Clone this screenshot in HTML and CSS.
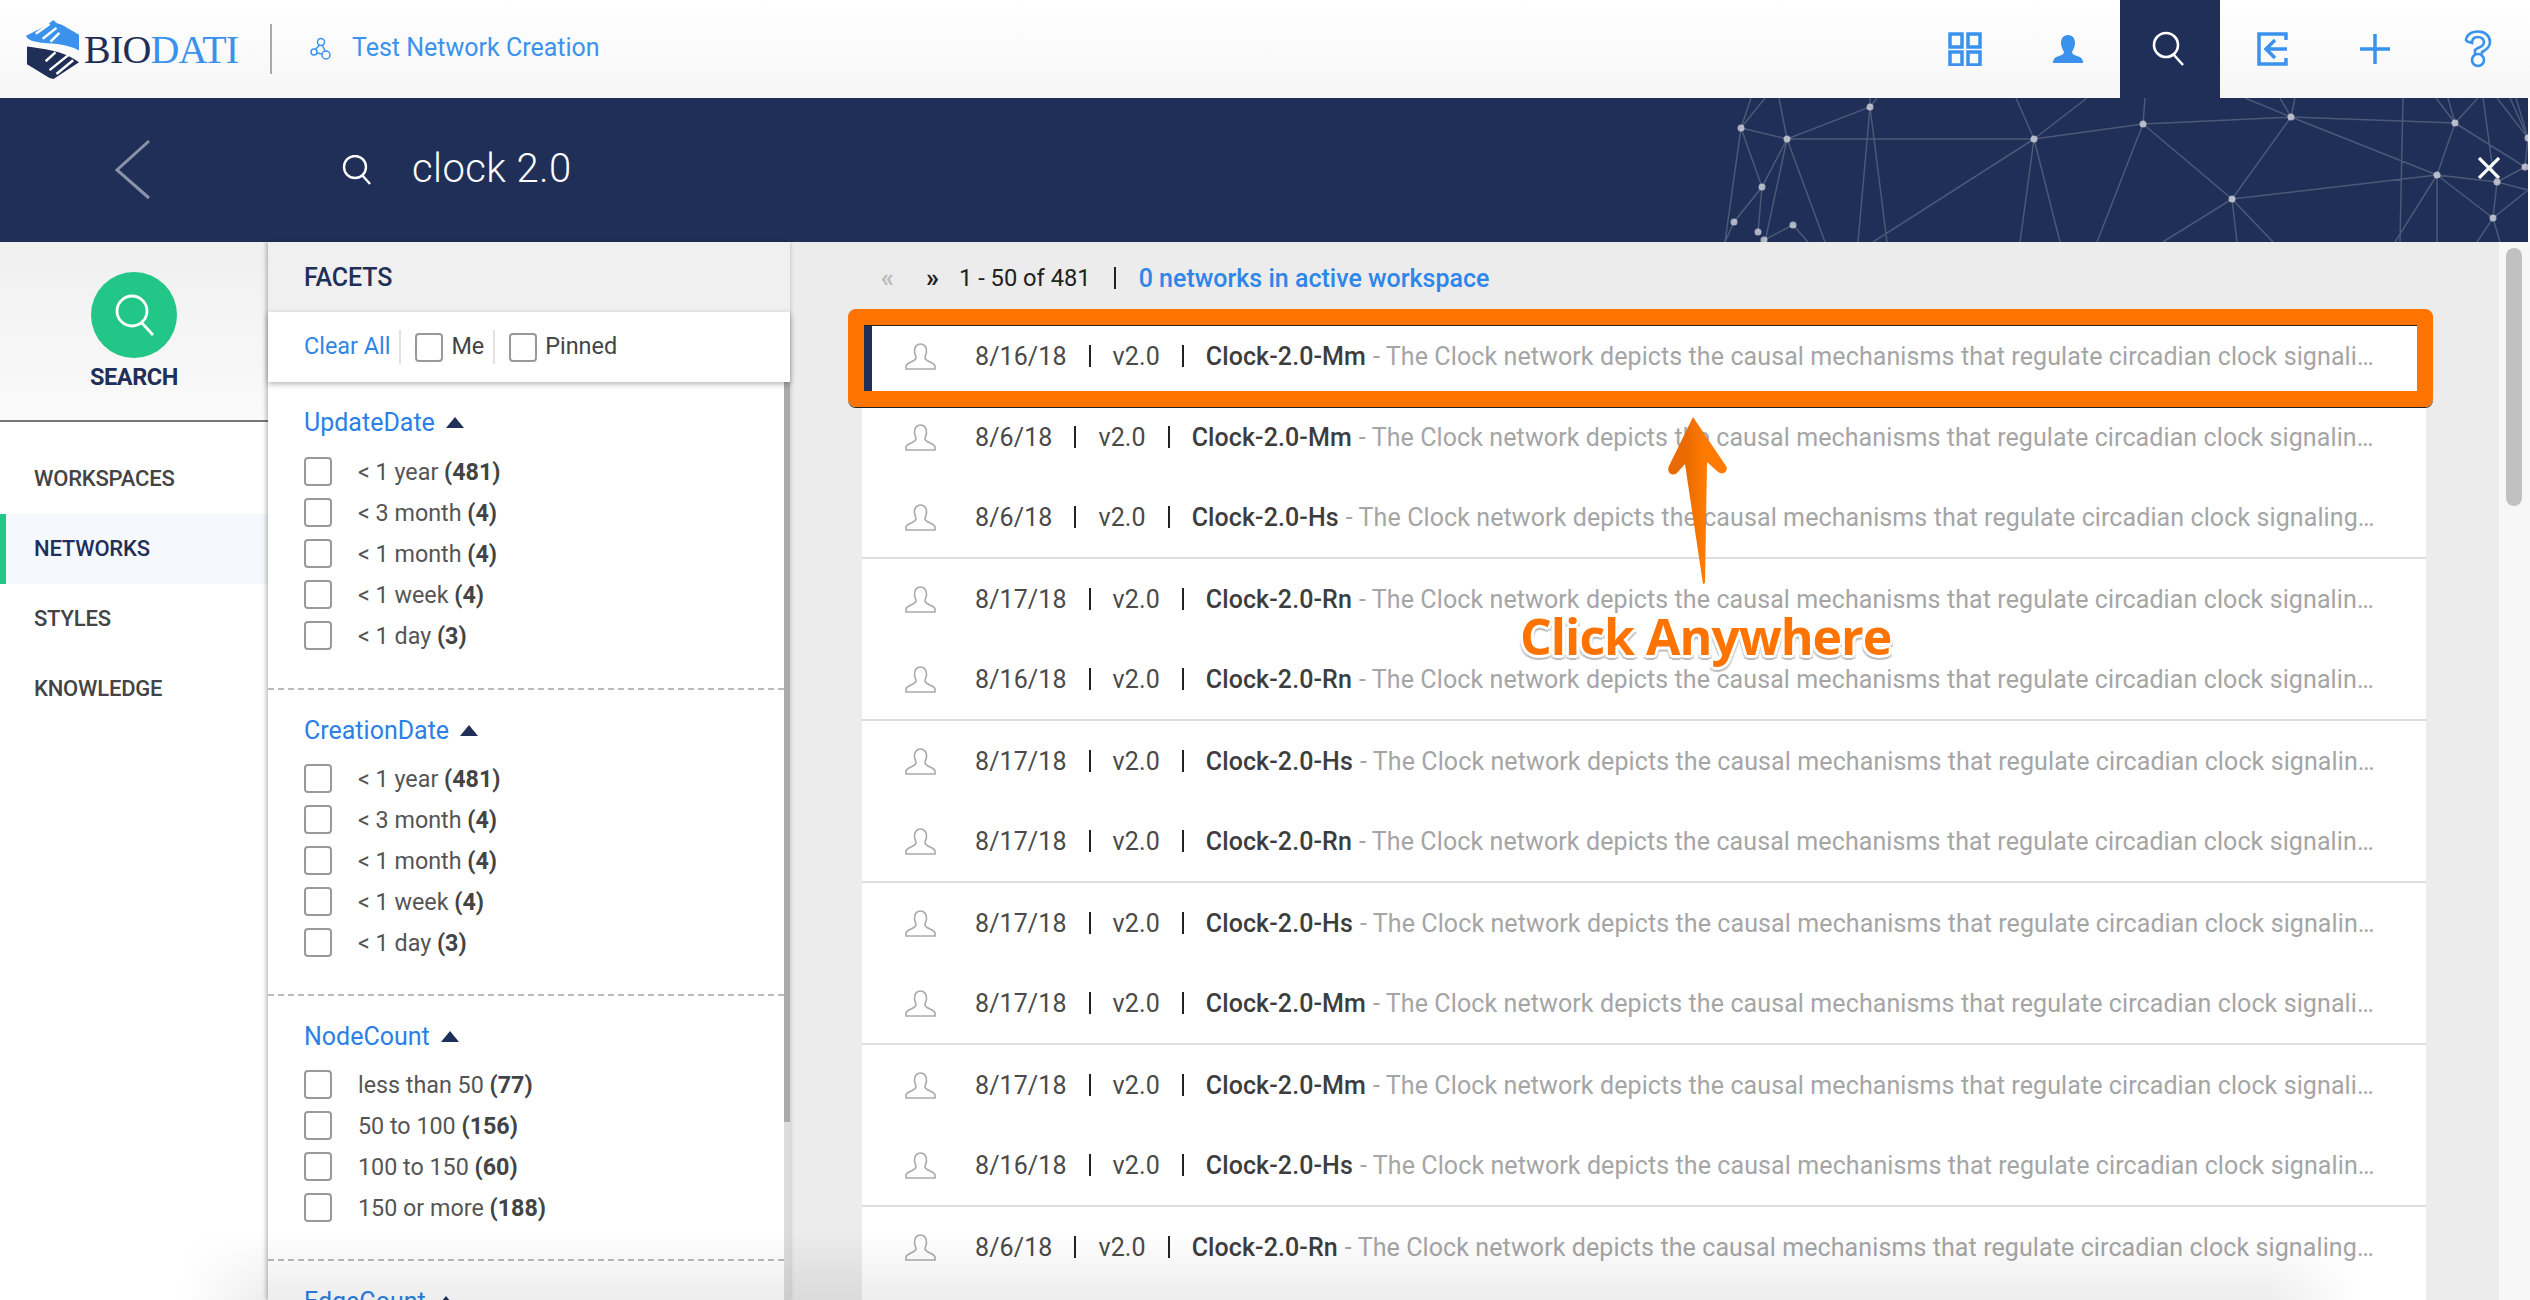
FILE: index.html
```html
<!DOCTYPE html>
<html lang="en">
<head>
    <meta charset="UTF-8">
    <title>BioDati - Test Network Creation</title>
    <link rel="stylesheet" href="styles.css">
</head>
<body>
    <svg class="defs" width="0" height="0">
        <symbol id="avatar" viewBox="0 0 31 27">
            <path d="M1 26 L30 26 L30 23 C29 19 21 19 20 15 C20 13 21 12 21.500 9 C22 4 19 1 15.500 1 C12 1 9 4 9.500 9 C10 12 11 13 11 15 C10 19 2 19 1 23 Z" fill="none" stroke="#aaa" stroke-width="1.600"/>
        </symbol>
    </svg>

    <header class="topbar">
        <div class="brand">
            <svg class="brand-mark" viewBox="0 0 56 62">
                <path d="M0 17 L20 7 L28 1 L31 4 L37 6 L54 16 L54 32 C44 26 30 25 16 24 C8 23 2 22 0 17 Z" fill="#3a92ec"/>
                <path d="M10 15 L24 5 M17 20 L31 9 M25 23 L34 14" stroke="#fff" stroke-width="2.500" fill="none"/>
                <path d="M1 28 C16 30 38 32 54 44 L28 61 L24 60 L1 46 Z" fill="#1f2f57"/>
                <path d="M24 52 L44 36 M31 56 L48 42 M20 43 L30 34" stroke="#fff" stroke-width="2.500" fill="none"/>
            </svg>
            <span class="brand-name">BIO<span class="brand-accent">DATI</span></span>
        </div>
        <div class="brand-rule"></div>
        <svg class="net-icon" viewBox="0 0 22 24">
            <circle cx="11" cy="5" r="3.500"/>
            <circle cx="4" cy="15" r="3"/>
            <circle cx="16" cy="18" r="4"/>
            <path d="M9.500 8 L5.500 12.500 M12.500 8.500 L15 14 M7 16 L12 17"/>
        </svg>
        <span class="page-title">Test Network Creation</span>

        <nav class="top-icons">
            <a class="top-icon">
                <svg width="34" height="34" viewBox="0 0 34 34" class="ico-line">
                    <rect x="2" y="2" width="12" height="13"/>
                    <rect x="20" y="2" width="12" height="13"/>
                    <rect x="2" y="20" width="12" height="13"/>
                    <rect x="20" y="20" width="12" height="13"/>
                </svg>
            </a>
            <a class="top-icon">
                <svg width="32" height="28" viewBox="0 0 32 28">
                    <path d="M16 0 C21 0 23 4 23 8 C23 12 21 15 20 17 C20 19 22 20 25 21 C29 22 31 24 31 28 L1 28 C1 24 3 22 7 21 C10 20 12 19 12 17 C11 15 9 12 9 8 C9 4 11 0 16 0 Z" fill="#3a92ec"/>
                </svg>
            </a>
            <a class="top-icon active">
                <svg width="36" height="36" viewBox="0 0 36 36" class="ico-white">
                    <circle cx="14" cy="14" r="12"/>
                    <path d="M22 24 L31 34"/>
                </svg>
            </a>
            <a class="top-icon">
                <svg width="32" height="34" viewBox="0 0 32 34" class="ico-line">
                    <path d="M29 8 L29 2 L2 2 L2 32 L29 32 L29 26"/>
                    <path d="M30 17 L10 17 M18 8 L9 17 L18 26"/>
                </svg>
            </a>
            <a class="top-icon">
                <svg width="32" height="32" viewBox="0 0 32 32" class="ico-line">
                    <path d="M16 1 L16 31 M1 16 L31 16"/>
                </svg>
            </a>
            <a class="top-icon">
                <svg width="28" height="38" viewBox="0 0 28 38" class="ico-thin">
                    <path d="M2 11 C2 5 7 1.500 14 1.500 C21 1.500 26 6 26 12 C26 17 22 20 18 22 L18 24 M2 11 L8 13 C8 9 10 7 14 7 C17 7 20 9 20 12 C20 15 17 17 14 18 L11 20 L11 25"/>
                    <circle cx="14" cy="30" r="6"/>
                </svg>
            </a>
        </nav>
    </header>

    <section class="search-band">
        <svg class="network-bg" viewBox="1700 98 828 144">
            <path class="net-lines" d="M1741 128 L1787 139 L1870 107 L1877 98 M1741 128 L1751 98 M1741 128 L1765 98 M1787 139 L1779 98 M1741 128 L1762 187 M1741 128 L1725 242 M1787 139 L1762 187 L1734 222 L1725 242 M1762 187 L1758 232 M1787 139 L1765 242 M1764 240 L1793 225 L1808 242 M1787 139 L1825 242 M1787 139 L2034 139 M1870 107 L1858 242 M1870 107 L1887 242 M1870 98 L1870 107 M2034 139 L1873 242 M2034 139 L2016 98 M2034 139 L2087 98 M2034 139 L2143 124 M2034 139 L2020 242 M2034 139 L2060 242 M2143 124 L2097 242 M2143 124 L2145 98 M2143 124 L2232 199 M2143 124 L2291 117 L2232 199 M2291 117 L2437 175 M2291 117 L2455 123 M2291 117 L2245 98 M2291 117 L2295 98 M2291 117 L2280 98 M2232 199 L2437 175 M2232 199 L2163 242 M2232 199 L2237 242 M2232 199 L2273 242 M2403 98 L2400 242 M2437 175 L2455 123 M2437 175 L2395 242 M2437 175 L2437 242 M2437 175 L2497 182 L2528 190 M2437 175 L2493 218 L2528 190 M2455 123 L2525 167 M2455 123 L2436 98 M2455 123 L2448 98 M2455 123 L2478 98 M2497 182 L2493 218 M2493 218 L2477 242 M2493 218 L2500 242 M2483 98 L2493 170 L2497 182 M2497 98 L2528 138 M2510 98 L2528 138 M2516 98 L2528 138 M2528 138 L2525 167 L2497 182"/>
            <g class="net-nodes">
                <circle cx="1741" cy="128" r="3.500"/><circle cx="1787" cy="139" r="3.500"/>
                <circle cx="1870" cy="107" r="3.500"/><circle cx="2034" cy="139" r="3.500"/>
                <circle cx="2143" cy="124" r="3.500"/><circle cx="1762" cy="187" r="3.500"/>
                <circle cx="1734" cy="222" r="3.500"/><circle cx="1758" cy="232" r="3.500"/>
                <circle cx="1764" cy="240" r="3.500"/><circle cx="1793" cy="225" r="3.500"/>
                <circle cx="2291" cy="117" r="3.500"/><circle cx="2232" cy="199" r="3.500"/>
                <circle cx="2455" cy="123" r="3.500"/><circle cx="2437" cy="175" r="3.500"/>
                <circle cx="2497" cy="182" r="3.500"/><circle cx="2493" cy="218" r="3.500"/>
                <circle cx="2525" cy="167" r="3.500"/><circle cx="2528" cy="138" r="3.500"/>
            </g>
        </svg>
        <svg class="back-arrow" width="36" height="62" viewBox="0 0 36 62">
            <path d="M34 2 L2 31 L34 59"/>
        </svg>
        <svg class="band-search" width="30" height="30" viewBox="0 0 30 30">
            <circle cx="13" cy="12" r="11"/>
            <path d="M20 20 L28 29"/>
        </svg>
        <span class="query">clock 2.0</span>
        <svg class="band-close" width="22" height="22" viewBox="0 0 22 22">
            <path d="M1 1 L21 21 M21 1 L1 21"/>
        </svg>
    </section>

    <div class="workarea">
        <aside class="sidebar">
            <div class="sidebar-top">
                <div class="search-circle">
                    <svg width="42" height="42" viewBox="0 0 42 42">
                        <circle cx="19" cy="17" r="15"/>
                        <path d="M29 29 L40 41"/>
                    </svg>
                </div>
                <div class="search-label">SEARCH</div>
            </div>
            <ul class="side-nav">
                <li>WORKSPACES</li>
                <li class="current">NETWORKS</li>
                <li>STYLES</li>
                <li>KNOWLEDGE</li>
            </ul>
        </aside>

        <section class="facets">
            <div class="facets-head">FACETS</div>
            <div class="facets-tools">
                <a class="clear-all">Clear All</a>
                <span class="tool-rule"></span>
                <span class="checkbox"></span>
                <span class="tool-label">Me</span>
                <span class="tool-rule"></span>
                <span class="checkbox"></span>
                <span class="tool-label">Pinned</span>
            </div>
            <div class="facets-scroll">
                <div class="facets-list">
                    <div class="facet-group first">
                        <div class="facet-title">UpdateDate <span class="caret"></span></div>
                        <div class="facet-row"><span class="checkbox"></span><span>&lt; 1 year <b>(481)</b></span></div>
                        <div class="facet-row"><span class="checkbox"></span><span>&lt; 3 month <b>(4)</b></span></div>
                        <div class="facet-row"><span class="checkbox"></span><span>&lt; 1 month <b>(4)</b></span></div>
                        <div class="facet-row"><span class="checkbox"></span><span>&lt; 1 week <b>(4)</b></span></div>
                        <div class="facet-row"><span class="checkbox"></span><span>&lt; 1 day <b>(3)</b></span></div>
                    </div>
                    <div class="facet-group">
                        <div class="facet-title">CreationDate <span class="caret"></span></div>
                        <div class="facet-row"><span class="checkbox"></span><span>&lt; 1 year <b>(481)</b></span></div>
                        <div class="facet-row"><span class="checkbox"></span><span>&lt; 3 month <b>(4)</b></span></div>
                        <div class="facet-row"><span class="checkbox"></span><span>&lt; 1 month <b>(4)</b></span></div>
                        <div class="facet-row"><span class="checkbox"></span><span>&lt; 1 week <b>(4)</b></span></div>
                        <div class="facet-row"><span class="checkbox"></span><span>&lt; 1 day <b>(3)</b></span></div>
                    </div>
                    <div class="facet-group">
                        <div class="facet-title">NodeCount <span class="caret"></span></div>
                        <div class="facet-row"><span class="checkbox"></span><span>less than 50 <b>(77)</b></span></div>
                        <div class="facet-row"><span class="checkbox"></span><span>50 to 100 <b>(156)</b></span></div>
                        <div class="facet-row"><span class="checkbox"></span><span>100 to 150 <b>(60)</b></span></div>
                        <div class="facet-row"><span class="checkbox"></span><span>150 or more <b>(188)</b></span></div>
                    </div>
                    <div class="facet-group">
                        <div class="facet-title">EdgeCount <span class="caret"></span></div>
                    </div>
                </div>
                <div class="facets-bar"><div class="facets-thumb"></div></div>
            </div>
        </section>

        <main class="results">
            <div class="pager">
                <span class="pager-off">«</span>
                <span class="pager-on">»</span>
                <span>1 - 50 of 481</span>
                <span class="pager-sep"></span>
                <a class="pager-link">0 networks in active workspace</a>
            </div>

            <div class="net-list">
                <div class="net-group">
                    <div class="net-row selected">
                        <svg class="avatar"><use href="#avatar"/></svg>
                        <span class="cell">8/16/18</span><i></i><span class="cell">v2.0</span><i></i><span class="name">Clock-2.0-Mm</span>
                        <span class="desc">- The Clock network depicts the causal mechanisms that regulate circadian clock signaling pathways in the cell</span>
                    </div>
                    <div class="net-row">
                        <svg class="avatar"><use href="#avatar"/></svg>
                        <span class="cell">8/6/18</span><i></i><span class="cell">v2.0</span><i></i><span class="name">Clock-2.0-Mm</span>
                        <span class="desc">- The Clock network depicts the causal mechanisms that regulate circadian clock signaling pathways in the cell</span>
                    </div>
                    <div class="net-row">
                        <svg class="avatar"><use href="#avatar"/></svg>
                        <span class="cell">8/6/18</span><i></i><span class="cell">v2.0</span><i></i><span class="name">Clock-2.0-Hs</span>
                        <span class="desc">- The Clock network depicts the causal mechanisms that regulate circadian clock signaling pathways in the cell</span>
                    </div>
                </div>
                <div class="net-group">
                    <div class="net-row">
                        <svg class="avatar"><use href="#avatar"/></svg>
                        <span class="cell">8/17/18</span><i></i><span class="cell">v2.0</span><i></i><span class="name">Clock-2.0-Rn</span>
                        <span class="desc">- The Clock network depicts the causal mechanisms that regulate circadian clock signaling pathways in the cell</span>
                    </div>
                    <div class="net-row">
                        <svg class="avatar"><use href="#avatar"/></svg>
                        <span class="cell">8/16/18</span><i></i><span class="cell">v2.0</span><i></i><span class="name">Clock-2.0-Rn</span>
                        <span class="desc">- The Clock network depicts the causal mechanisms that regulate circadian clock signaling pathways in the cell</span>
                    </div>
                </div>
                <div class="net-group">
                    <div class="net-row">
                        <svg class="avatar"><use href="#avatar"/></svg>
                        <span class="cell">8/17/18</span><i></i><span class="cell">v2.0</span><i></i><span class="name">Clock-2.0-Hs</span>
                        <span class="desc">- The Clock network depicts the causal mechanisms that regulate circadian clock signaling pathways in the cell</span>
                    </div>
                    <div class="net-row">
                        <svg class="avatar"><use href="#avatar"/></svg>
                        <span class="cell">8/17/18</span><i></i><span class="cell">v2.0</span><i></i><span class="name">Clock-2.0-Rn</span>
                        <span class="desc">- The Clock network depicts the causal mechanisms that regulate circadian clock signaling pathways in the cell</span>
                    </div>
                </div>
                <div class="net-group">
                    <div class="net-row">
                        <svg class="avatar"><use href="#avatar"/></svg>
                        <span class="cell">8/17/18</span><i></i><span class="cell">v2.0</span><i></i><span class="name">Clock-2.0-Hs</span>
                        <span class="desc">- The Clock network depicts the causal mechanisms that regulate circadian clock signaling pathways in the cell</span>
                    </div>
                    <div class="net-row">
                        <svg class="avatar"><use href="#avatar"/></svg>
                        <span class="cell">8/17/18</span><i></i><span class="cell">v2.0</span><i></i><span class="name">Clock-2.0-Mm</span>
                        <span class="desc">- The Clock network depicts the causal mechanisms that regulate circadian clock signaling pathways in the cell</span>
                    </div>
                </div>
                <div class="net-group">
                    <div class="net-row">
                        <svg class="avatar"><use href="#avatar"/></svg>
                        <span class="cell">8/17/18</span><i></i><span class="cell">v2.0</span><i></i><span class="name">Clock-2.0-Mm</span>
                        <span class="desc">- The Clock network depicts the causal mechanisms that regulate circadian clock signaling pathways in the cell</span>
                    </div>
                    <div class="net-row">
                        <svg class="avatar"><use href="#avatar"/></svg>
                        <span class="cell">8/16/18</span><i></i><span class="cell">v2.0</span><i></i><span class="name">Clock-2.0-Hs</span>
                        <span class="desc">- The Clock network depicts the causal mechanisms that regulate circadian clock signaling pathways in the cell</span>
                    </div>
                </div>
                <div class="net-group">
                    <div class="net-row">
                        <svg class="avatar"><use href="#avatar"/></svg>
                        <span class="cell">8/6/18</span><i></i><span class="cell">v2.0</span><i></i><span class="name">Clock-2.0-Rn</span>
                        <span class="desc">- The Clock network depicts the causal mechanisms that regulate circadian clock signaling pathways in the cell</span>
                    </div>
                </div>
            </div>

            <!-- tutorial annotation over the list -->
            <svg class="hint-arrow" width="62" height="170" viewBox="0 0 62 170">
                <defs>
                    <linearGradient id="arrowFill" x1="0" x2="1" y1="0" y2="0">
                        <stop offset="0.3" stop-color="#e86a00"/>
                        <stop offset="0.6" stop-color="#ff7a00"/>
                    </linearGradient>
                </defs>
                <path d="M26 1 L59 50 C62 56 55 60 50 55 L40 46 L38 167 L36 168 L18 48 L10 57 C5 61 -1 56 2 50 Z" fill="url(#arrowFill)"/>
            </svg>
            <div class="hint-text">Click Anywhere</div>
        </main>

        <div class="page-bar"><div class="page-thumb"></div></div>
    </div>
    <div class="bottom-fade"></div>
</body>
</html>
```

FILE: styles.css
```css
* {
    box-sizing: border-box;
}
html, body {
    margin: 0;
    height: 100%;
}
body {
    font-family: Roboto, "Liberation Sans", sans-serif;
    color: #444;
    background: #fff;
    overflow: hidden;
    position: relative;
    display: flex;
    flex-direction: column;
}
.defs {
    position: absolute;
}

/* top bar */
.topbar {
    height: 98px;
    flex: none;
    display: flex;
    align-items: center;
    padding-left: 26px;
    background: linear-gradient(#fff, #f6f6f6);
}
.brand {
    display: flex;
    align-items: center;
    width: 244px;
}
.brand-mark {
    width: 55px;
    height: 61px;
    margin-right: 3px;
}
.brand-name {
    font-family: "Liberation Serif", serif;
    font-size: 40px;
    letter-spacing: -0.8px;
    color: #1f2f57;
}
.brand-accent {
    color: #3a92ec;
}
.brand-rule {
    width: 2px;
    height: 50px;
    background: #aaa;
    margin-right: 38px;
}
.net-icon {
    width: 22px;
    height: 24px;
    margin-right: 20px;
    fill: none;
    stroke: #3a92ec;
    stroke-width: 1.5;
}
.page-title {
    font-size: 25px;
    margin-bottom: 3px;
    color: #3a92ec;
}
.top-icons {
    margin-left: auto;
    display: flex;
    gap: 2.6px;
    padding-right: 2px;
    height: 100%;
}
.top-icon {
    width: 100px;
    display: flex;
    align-items: center;
    justify-content: center;
}
.top-icon.active {
    background: #1f2f57;
}
.ico-line, .ico-thin, .ico-white {
    fill: none;
    stroke: #3a92ec;
    stroke-width: 3.5;
}
.ico-thin {
    stroke-width: 2.6;
}
.ico-white {
    stroke: #fff;
    stroke-width: 2.6;
}

/* search band */
.search-band {
    height: 144px;
    flex: none;
    margin-right: 2px;
    background: #1f2f57;
    position: relative;
    display: flex;
    align-items: center;
    color: #fff;
}
.network-bg {
    position: absolute;
    left: 1700px;
    top: 0;
    width: 828px;
    height: 144px;
}
.net-lines {
    fill: none;
    stroke: rgba(255, 255, 255, 0.2);
    stroke-width: 1.5;
}
.net-nodes circle {
    fill: rgba(255, 255, 255, 0.62);
}
.back-arrow {
    margin-left: 115px;
    fill: none;
    stroke: #8a92a8;
    stroke-width: 3;
}
.band-search {
    margin-left: 191px;
    fill: none;
    stroke: #fff;
    stroke-width: 2.4;
}
.query {
    margin-left: 40px;
    margin-bottom: 3px;
    font-size: 40px;
    font-weight: 300;
    letter-spacing: 0.4px;
}
.band-close {
    position: absolute;
    right: 28px;
    top: 59px;
    stroke: #fff;
    stroke-width: 3.2;
}

/* main layout */
.workarea {
    flex: 1;
    min-height: 0;
    display: flex;
}
.sidebar {
    width: 268px;
    flex: none;
    background: #fff;
}
.sidebar-top {
    height: 180px;
    padding-top: 30px;
    border-bottom: 2px solid #777;
    background: linear-gradient(#f0f0f0, #fafafa);
    display: flex;
    flex-direction: column;
    align-items: center;
}
.search-circle {
    width: 86px;
    height: 86px;
    border-radius: 50%;
    background: #22c687;
    display: flex;
    align-items: center;
    justify-content: center;
    fill: none;
    stroke: #fff;
    stroke-width: 2.8;
}
.search-label {
    margin-top: 5px;
    font-size: 23.5px;
    font-weight: 700;
    letter-spacing: -0.4px;
    color: #1f2f57;
}
.side-nav {
    list-style: none;
    margin: 22px 0 0;
    padding: 0;
}
.side-nav li {
    height: 70px;
    line-height: 70px;
    padding-left: 34px;
    font-size: 22px;
    font-weight: 500;
    letter-spacing: -0.2px;
    color: #444;
}
.side-nav li.current {
    color: #1f2f57;
    background: #f5f8fd;
    border-left: 6px solid #22c687;
    padding-left: 28px;
}

/* facets */
.facets {
    width: 522px;
    flex: none;
    display: flex;
    flex-direction: column;
    background: #fff;
    position: relative;
    box-shadow: -2px 0 4px rgba(0, 0, 0, 0.25), 2px 0 3px rgba(0, 0, 0, 0.08);
    z-index: 1;
}
.facets-head {
    height: 70px;
    line-height: 72px;
    flex: none;
    padding-left: 36px;
    background: #f0f0f0;
    font-size: 25px;
    font-weight: 500;
    letter-spacing: -0.1px;
    color: #1f2f57;
}
.facets-tools {
    height: 70px;
    flex: none;
    display: flex;
    align-items: center;
    padding-left: 36px;
    font-size: 23.4px;
    box-shadow: 0 2px 6px rgba(0, 0, 0, 0.3);
    position: relative;
    z-index: 1;
    background: #fff;
}
.clear-all {
    color: #2f86e8;
    margin-bottom: 2px;
}
.tool-rule {
    width: 2px;
    height: 34px;
    background: #e2e2e2;
    margin: 0 14px 0 9px;
}
.tool-label {
    margin-left: 8px;
    margin-bottom: 2px;
    color: #444;
}
.checkbox {
    width: 28px;
    height: 29px;
    flex: none;
    border: 2px solid #999;
    border-radius: 4px;
    background: #fff;
}
.facets-scroll {
    flex: 1;
    min-height: 0;
    display: flex;
}
.facets-list {
    flex: 1;
    min-width: 0;
    overflow: hidden;
}
.facets-bar {
    width: 6px;
    flex: none;
    background: #ddd;
}
.facets-thumb {
    height: 740px;
    background: #aaa;
}
.facet-group {
    padding: 26px 0 31px 36px;
    border-bottom: 2px dashed #bbb;
}
.facet-group.first {
    margin-top: 2px;
    padding-top: 24px;
    padding-bottom: 32px;
}
.facet-title {
    height: 30px;
    line-height: 30px;
    margin-bottom: 12px;
    font-size: 25px;
    color: #2b7fe6;
}
.first .facet-title {
    margin-bottom: 13px;
}
.caret {
    display: inline-block;
    margin-left: 5px;
    vertical-align: 3px;
    border-left: 9px solid transparent;
    border-right: 9px solid transparent;
    border-bottom: 11px solid #1f2f57;
}
.facet-row {
    height: 41px;
    display: flex;
    align-items: center;
    gap: 26px;
    font-size: 23.3px;
    color: #555;
}
.facet-row b {
    font-weight: 700;
    color: #444;
}

/* results */
.results {
    flex: 1;
    min-width: 0;
    background: #ececec;
    padding: 0 73px 0 72px;
    position: relative;
    overflow: hidden;
    display: flex;
    flex-direction: column;
}
.pager {
    height: 72px;
    flex: none;
    margin-bottom: 3px;
    display: flex;
    align-items: center;
    font-size: 23.7px;
    color: #222;
}
.pager-off {
    color: #bbb;
    font-weight: 700;
    font-size: 26px;
    margin-left: 19px;
    margin-right: 32px;
}
.pager-on {
    font-weight: 700;
    font-size: 26px;
    margin-right: 20px;
}
.pager-sep {
    width: 2px;
    height: 22px;
    background: #222;
    margin: 0 23px;
}
.pager-link {
    color: #2f86e8;
    font-size: 25px;
    font-weight: 500;
}
.net-list {
    flex: 1;
    background: #fff;
}
.net-group {
    border-bottom: 2px solid #ddd;
}
.net-group:last-child {
    border-bottom: 0;
}
.net-row {
    height: 80px;
    display: flex;
    align-items: center;
    padding: 0 48px 0 43px;
    font-size: 25px;
    letter-spacing: 0.1px;
    color: #4a4a4a;
    white-space: nowrap;
    position: relative;
}
.net-row.selected {
    padding-bottom: 2px;
}
.avatar {
    width: 31px;
    height: 27px;
    flex: none;
    margin-right: 39px;
}
.net-row i {
    width: 2px;
    height: 22px;
    flex: none;
    background: #222;
    margin: 0 22px;
}
.name {
    color: #3d3d3d;
    font-weight: 500;
}
.desc {
    flex: 1;
    min-width: 0;
    margin-left: 7px;
    overflow: hidden;
    text-overflow: ellipsis;
    color: #a5a5a5;
}
.net-row.selected::before {
    content: "";
    position: absolute;
    left: 2px;
    top: 8px;
    bottom: 6px;
    width: 8px;
    background: #1f2f57;
}
.net-row.selected::after {
    content: "";
    position: absolute;
    left: -14px;
    right: -7px;
    top: -8px;
    bottom: -10px;
    border: 16px solid #ff7300;
    border-radius: 8px;
    box-shadow: 0 1px 0 #222, inset 0 1px 0 #222;
    z-index: 2;
}
.hint-arrow {
    position: absolute;
    left: 877px;
    top: 174px;
    z-index: 3;
}
.hint-text {
    position: absolute;
    left: 730px;
    top: 358px;
    z-index: 3;
    font-family: "Open Sans", sans-serif;
    font-weight: 700;
    font-size: 50px;
    letter-spacing: -1px;
    line-height: 72px;
    color: #ff7300;
    white-space: nowrap;
    text-shadow: 3px 0 0 #fff, -3px 0 0 #fff, 0 3px 0 #fff, 0 -3px 0 #fff,
        2px 2px 0 #fff, -2px 2px 0 #fff, 2px -2px 0 #fff, -2px -2px 0 #fff,
        0 5px 1px #bbb, 3px 4px 1px #ccc, -3px 4px 1px #ccc;
}

/* page scrollbar */
.page-bar {
    width: 31px;
    flex: none;
    background: #f7f7f7;
    padding: 6px 8px 0 7px;
}
.page-thumb {
    height: 258px;
    border-radius: 8px;
    background: #c1c1c1;
}

/* soft shade along the bottom edge of the window */
.bottom-fade {
    position: absolute;
    left: 180px;
    right: 170px;
    bottom: 0;
    height: 70px;
    z-index: 4;
    pointer-events: none;
    background: linear-gradient(rgba(0, 0, 0, 0), rgba(0, 0, 0, 0.07));
    -webkit-mask-image: linear-gradient(90deg, transparent, #000 90px, #000 calc(100% - 90px), transparent);
    mask-image: linear-gradient(90deg, transparent, #000 90px, #000 calc(100% - 90px), transparent);
}
```
